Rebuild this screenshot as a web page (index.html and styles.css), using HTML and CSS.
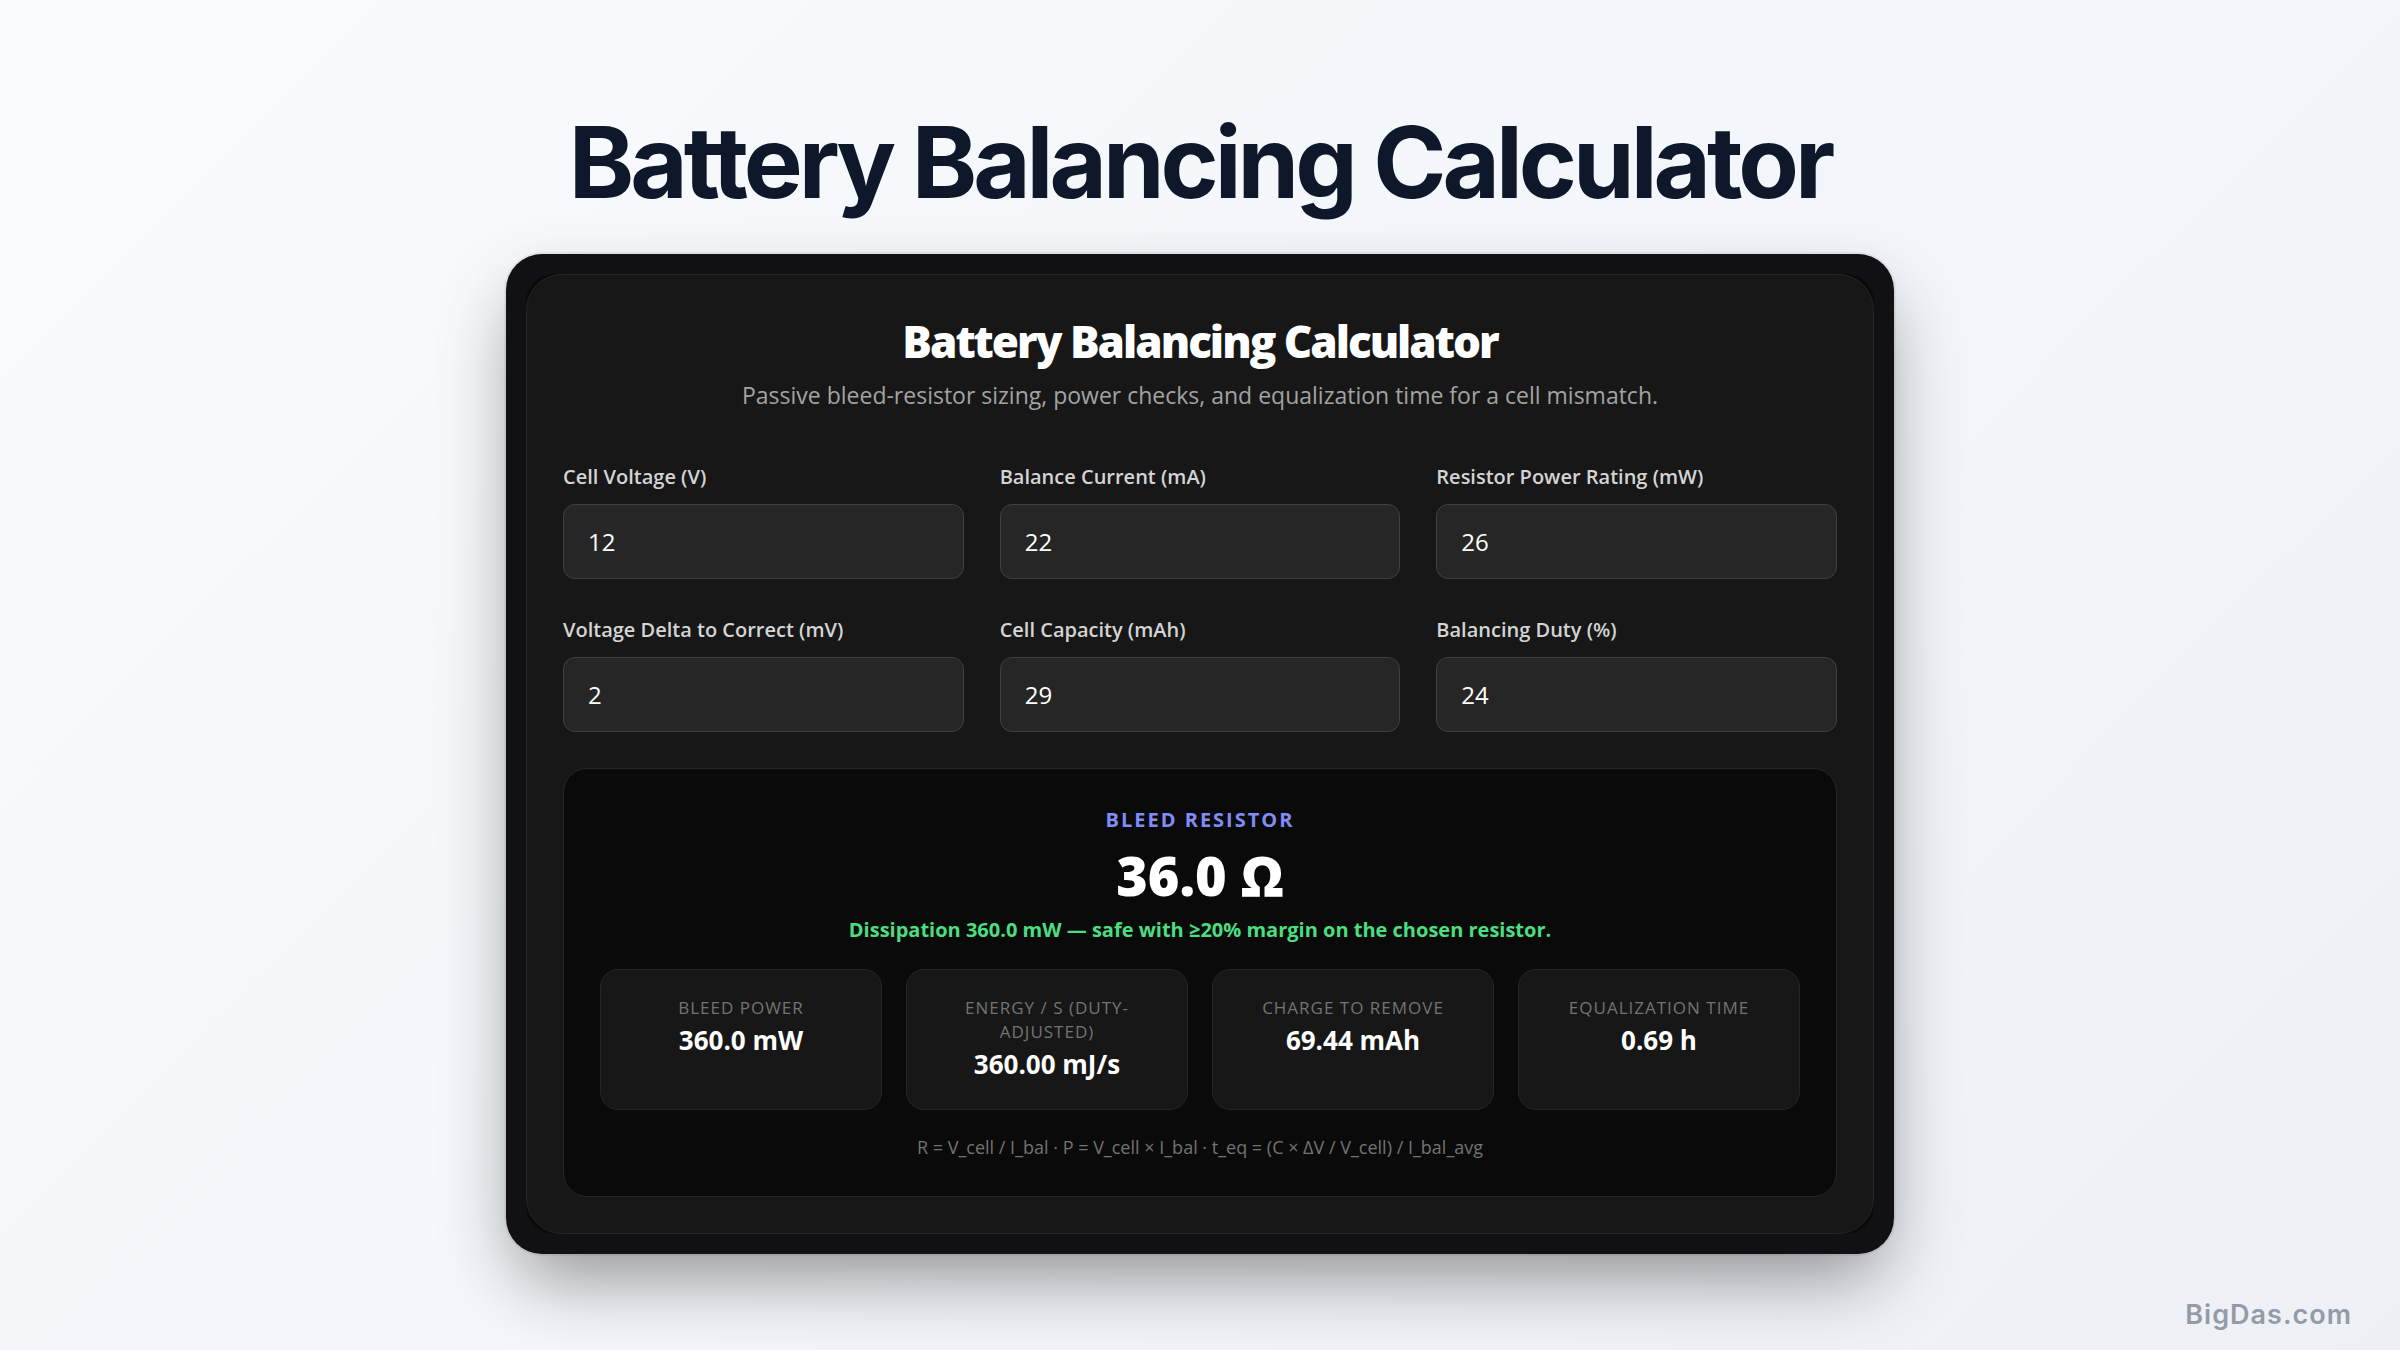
FILE: index.html
```html
<!DOCTYPE html>
<html lang="en">
<head>
<meta charset="utf-8">
<meta name="viewport" content="width=device-width, initial-scale=1">
<title>Battery Balancing Calculator</title>
<link rel="stylesheet" href="styles.css">
</head>
<body>
<main class="page">
  <h1 class="page-title">Battery Balancing Calculator</h1>
  <div class="frame">
    <div class="backdrop">
      <section class="calculator">
        <header class="intro">
          <h2 class="heading">Battery Balancing Calculator</h2>
          <p class="subtitle">Passive bleed-resistor sizing, power checks, and equalization time for a cell mismatch.</p>
        </header>
        <form class="fields">
          <div class="field"><label for="voltage">Cell Voltage (V)</label><input id="voltage" type="text" inputmode="decimal" value="12"></div>
          <div class="field"><label for="current">Balance Current (mA)</label><input id="current" type="text" inputmode="decimal" value="22"></div>
          <div class="field"><label for="rating">Resistor Power Rating (mW)</label><input id="rating" type="text" inputmode="decimal" value="26"></div>
          <div class="field"><label for="delta">Voltage Delta to Correct (mV)</label><input id="delta" type="text" inputmode="decimal" value="2"></div>
          <div class="field"><label for="capacity">Cell Capacity (mAh)</label><input id="capacity" type="text" inputmode="decimal" value="29"></div>
          <div class="field"><label for="duty">Balancing Duty (%)</label><input id="duty" type="text" inputmode="decimal" value="24"></div>
        </form>
        <section class="results">
          <h3 class="result-label">Bleed Resistor</h3>
          <p class="result-value">36.0 Ω</p>
          <p class="result-status">Dissipation 360.0 mW — safe with ≥20% margin on the chosen resistor.</p>
          <dl class="stats">
            <div class="stat"><dt>Bleed Power</dt><dd>360.0 mW</dd></div>
            <div class="stat"><dt>Energy / s (duty-adjusted)</dt><dd>360.00 mJ/s</dd></div>
            <div class="stat"><dt>Charge to Remove</dt><dd>69.44 mAh</dd></div>
            <div class="stat"><dt>Equalization Time</dt><dd>0.69 h</dd></div>
          </dl>
          <p class="formula">R = V_cell / I_bal · P = V_cell × I_bal · t_eq = (C × ΔV / V_cell) / I_bal_avg</p>
        </section>
      </section>
    </div>
  </div>
</main>
<footer class="brand">BigDas.com</footer>
</body>
</html>
```
FILE: styles.css
```css
* { box-sizing: border-box; }

body {
  margin: 0;
  min-height: 100vh;
  background: linear-gradient(135deg, #f9fbfd 0%, #f3f6fa 50%, #edf1f6 100%);
  font-family: "Open Sans", "Noto Sans", sans-serif;
  color: #fff;
}

h1, h2, h3, p, dl, dd { margin: 0; }

.page {
  display: flex;
  flex-direction: column;
  align-items: center;
  gap: 32px;
  padding: 102px 32px 96px;
}

.page-title {
  font: 700 99px/120px Inter, sans-serif;
  letter-spacing: -4px;
  color: #0f172a;
  text-align: center;
}

.frame {
  width: 100%;
  max-width: 1388px;
  padding: 20px;
  border-radius: 36px;
  background: #111113;
  box-shadow: 0 0 0 2px rgba(15, 40, 30, 0.06), 0 34px 76px -12px rgba(0, 0, 0, 0.42);
}

.backdrop {
  border-radius: 28px;
  background: #0a0a0a;
}

.calculator {
  padding: 36px;
  border: 1px solid #262626;
  border-radius: 36px;
  background: #171717;
}

.intro {
  margin-bottom: 51px;
  text-align: center;
}

.heading {
  font-size: 44px;
  font-weight: 800;
  line-height: 60px;
  letter-spacing: -2px;
}

.subtitle {
  margin-top: 8px;
  font-size: 23px;
  line-height: 32px;
  color: #a3a3a3;
}

.fields {
  display: grid;
  grid-template-columns: repeat(3, minmax(0, 1fr));
  gap: 36px;
}

.field {
  display: flex;
  flex-direction: column;
  gap: 12px;
}

.field label {
  font-size: 20px;
  font-weight: 600;
  line-height: 30px;
  color: #d4d4d4;
}

.field input {
  width: 100%;
  height: 75px;
  padding: 0 24px;
  border: 1px solid #404040;
  border-radius: 12px;
  background: #262626;
  font: inherit;
  font-size: 24px;
  color: #fff;
}

.results {
  margin-top: 36px;
  padding: 36px;
  border: 1px solid #262626;
  border-radius: 24px;
  background: #0a0a0a;
  text-align: center;
}

.result-label {
  font-size: 20px;
  font-weight: 700;
  line-height: 30px;
  letter-spacing: 2px;
  text-transform: uppercase;
  color: #818cf8;
}

.result-value {
  font-size: 54px;
  font-weight: 800;
  line-height: 80px;
}

.result-status {
  font-size: 20px;
  font-weight: 700;
  line-height: 30px;
  color: #4ade80;
}

.stats {
  display: grid;
  grid-template-columns: repeat(4, minmax(0, 1fr));
  gap: 24px;
  margin-top: 24px;
}

.stat {
  padding: 26px 24px 25px;
  border: 1px solid #262626;
  border-radius: 18px;
  background: #171717;
}

.stat dt {
  font-size: 17px;
  line-height: 24px;
  letter-spacing: 1px;
  text-transform: uppercase;
  color: #737373;
}

.stat dd {
  font-size: 26px;
  font-weight: 700;
  line-height: 40px;
}

.formula {
  margin-top: 24px;
  font-size: 18px;
  line-height: 26px;
  color: #737373;
}

.brand {
  position: absolute;
  right: 48px;
  bottom: 18px;
  font: 600 27px/34px Inter, sans-serif;
  letter-spacing: 1px;
  color: #949ba8;
}
```
